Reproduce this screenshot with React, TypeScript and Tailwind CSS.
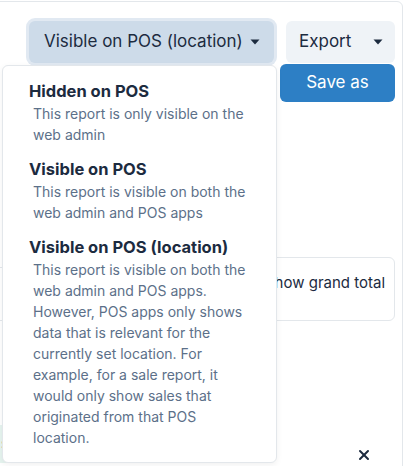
import { X } from 'lucide-react';

const options = [
  {
    title: 'Hidden on POS',
    description: 'This report is only visible on the web admin',
  },
  {
    title: 'Visible on POS',
    description: 'This report is visible on both the web admin and POS apps',
  },
  {
    title: 'Visible on POS (location)',
    description:
      'This report is visible on both the web admin and POS apps. However, POS apps only shows data that is relevant for the currently set location. For example, for a sale report, it would only show sales that originated from that POS location.',
  },
];

function Caret({ className = '' }: { className?: string }) {
  return (
    <svg width="10" height="6" viewBox="0 0 10 6" className={className}>
      <path d="M0.5 0.5h9L5 5.5z" fill="#1c2b3f" />
    </svg>
  );
}

export default function App() {
  return (
    <div
      className="relative w-[406px] h-[466px] overflow-hidden bg-white pt-[1px] pr-[3px]"
      style={{ fontFamily: 'Inter, "Noto Sans", sans-serif' }}
    >
      <div className="-ml-[12px] h-[480px] border border-[#e3e7eb] rounded-tr-md pt-[19px] pr-[7px] flex flex-col">
        {/* toolbar */}
        <div className="flex justify-end items-start gap-[3px]">
          <button className="w-[245px] h-[42px] rounded-md bg-[#cddbe9] ring-[3px] ring-[#e1e9f2] flex items-center justify-between pl-[15px] pr-[14px] text-[17px] text-[#1c2b3f]">
            <span>Visible on POS (location)</span>
            <Caret />
          </button>
          <div className="flex flex-col items-end gap-[1px] ml-[3px]">
            <button className="w-[109px] h-[42px] rounded-md bg-[#eff3f7] flex items-center justify-between pl-[13px] pr-[12px] text-[17px] text-[#1c2b3f]">
              <span>Export</span>
              <Caret />
            </button>
            <button className="w-[115px] h-[38px] rounded-md bg-[#2d7fc5] text-white text-[17px] flex items-center justify-center">
              Save as
            </button>
          </div>
        </div>

        {/* content behind the menu */}
        <div className="mt-[155px] flex items-start">
          <div className="flex-1 mt-[10px] h-[54px] border-y border-[#e3e7eb]" />
          <div className="w-[176px] h-[64px] border border-[#e3e7eb] rounded-md flex items-start pt-[14px] pl-[21px] gap-2 text-[15px] text-[#1c2b3f]">
            <span className="mt-[2px] w-[16px] h-[16px] border border-[#b8c2cc] rounded-sm" />
            <span>Show grand total</span>
          </div>
        </div>

        <div className="mt-[104px] flex items-center">
          <div className="ml-[4px] h-[38px] w-[20px] bg-[#e6f4ef] text-[15px] text-[#1c2b3f] flex items-center justify-end pr-[4px]">
            s
          </div>
          <div className="flex-1" />
          <X className="w-[16px] h-[16px] text-[#1c2b3f] mr-[23px] mt-[22px]" strokeWidth={3} />
        </div>
      </div>

      {/* dropdown menu */}
      <div className="absolute left-[2px] top-[65px] w-[275px] h-[398px] bg-white border border-[#e3e7eb] rounded-md shadow-[0_2px_6px_rgba(0,0,0,0.06)] pt-[13px] pl-[26px] pr-[26px] flex flex-col gap-[12px]">
        {options.map((o) => (
          <div key={o.title}>
            <div className="text-[16.5px] leading-[24px] font-bold text-[#1c2b3f]">{o.title}</div>
            <div className="pl-[4px] text-[14px] leading-[21px] text-[#5c7089]">{o.description}</div>
          </div>
        ))}
      </div>
    </div>
  );
}
